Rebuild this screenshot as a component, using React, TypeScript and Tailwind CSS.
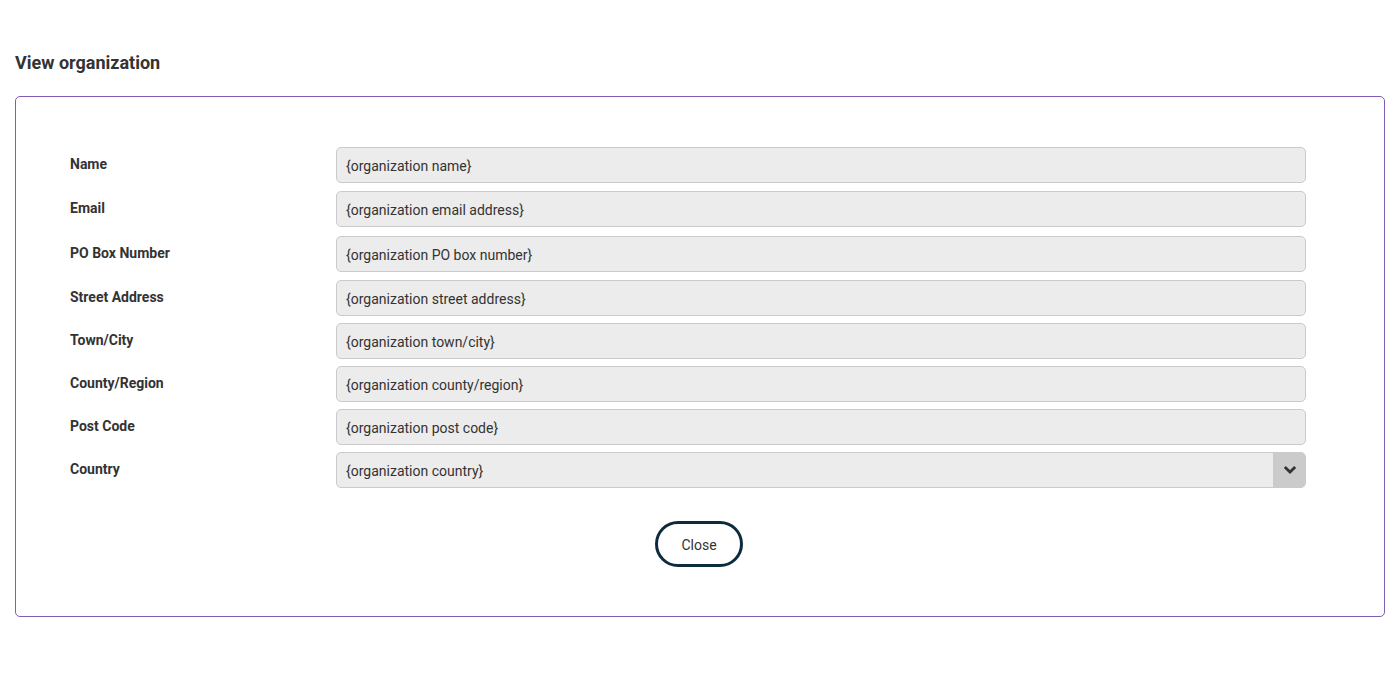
import React from "react";

const rows: { label: string; value: string; h: string; select?: boolean }[] = [
  { label: "Name", value: "{organization name}", h: "h-[44px]" },
  { label: "Email", value: "{organization email address}", h: "h-[45px]" },
  { label: "PO Box Number", value: "{organization PO box number}", h: "h-[44px]" },
  { label: "Street Address", value: "{organization street address}", h: "h-[43px]" },
  { label: "Town/City", value: "{organization town/city}", h: "h-[43px]" },
  { label: "County/Region", value: "{organization county/region}", h: "h-[43px]" },
  { label: "Post Code", value: "{organization post code}", h: "h-[43px]" },
  { label: "Country", value: "{organization country}", h: "h-[43px]", select: true },
];

export default function App() {
  return (
    <div
      className="w-[1400px] h-[676px] bg-white text-[#333]"
      style={{ fontFamily: "Roboto, 'Liberation Sans', sans-serif" }}
    >
      <div className="px-[15px] pt-[52px]">
        <h1 className="text-[18px] font-bold leading-[22px] text-[#333]">View organization</h1>
        <div className="mt-[22px] w-[1370px] h-[521px] border border-[#7e5cb8] rounded-[5px] pt-[50px] pl-[54px] pr-[78px]">
          <div className="flex flex-col">
            {rows.map((r) => (
              <div key={r.label} className={`flex items-start ${r.h}`}>
                <div className="w-[266px] pt-[9px] text-[14px] font-bold leading-[16px] text-[#333]">
                  {r.label}
                </div>
                <div className="relative flex-1 h-[36px] bg-[#ececec] border border-[#cacaca] rounded-[5px] flex items-center pl-[9px] pt-[2px] text-[14px] text-[#333] overflow-hidden">
                  {r.value}
                  {r.select && (
                    <div className="absolute right-0 top-0 bottom-0 w-[32px] bg-[#cbcbcb] flex items-center justify-center pl-[2px]">
                      <svg width="14" height="10" viewBox="0 0 14 10">
                        <path d="M1.8 2 L7 7 L12.2 2" fill="none" stroke="#333" strokeWidth="2.8" />
                      </svg>
                    </div>
                  )}
                </div>
              </div>
            ))}
          </div>
          <div className="flex justify-center mt-[26px] pl-[22px]">
            <button className="w-[88px] h-[46px] rounded-full border-[3px] border-[#0e2a3d] pt-[2px] text-[14px] text-[#333] bg-white">
              Close
            </button>
          </div>
        </div>
      </div>
    </div>
  );
}
